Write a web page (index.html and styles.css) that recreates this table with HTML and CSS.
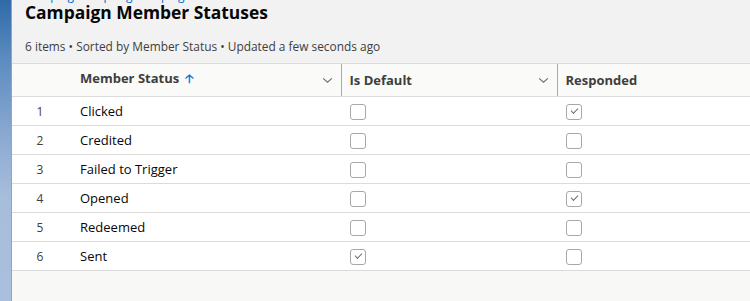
FILE: index.html
```html
<!DOCTYPE html>
<html lang="en">

<head>
    <meta charset="UTF-8">
    <meta name="viewport" content="width=device-width, initial-scale=1.0">
    <title>Campaign Member Statuses</title>
    <link rel="stylesheet" href="styles.css">
</head>

<body>
    <div class="rail"></div>

    <div class="panel">
        <div class="page-header">
            <div class="breadcrumb"><span>Campaigns &rsaquo; Spring Campaign</span></div>
            <h1>Campaign Member Statuses</h1>
            <p class="meta">6 items &bull; Sorted by Member Status &bull; Updated a few seconds ago</p>
        </div>

        <table class="status-table">
            <colgroup>
                <col class="col-num">
                <col class="col-status">
                <col class="col-default">
                <col>
            </colgroup>
            <thead>
                <tr>
                    <th></th>
                    <th>
                        <div class="th-inner">
                            <span>Member Status <span class="sort-arrow">&#129121;</span></span>
                            <svg class="chevron" viewBox="0 0 12 8"><path d="M1 1.5 L6 6 L11 1.5" /></svg>
                        </div>
                    </th>
                    <th class="divided">
                        <div class="th-inner">
                            <span>Is Default</span>
                            <svg class="chevron" viewBox="0 0 12 8"><path d="M1 1.5 L6 6 L11 1.5" /></svg>
                        </div>
                    </th>
                    <th class="divided">
                        <div class="th-inner">
                            <span>Responded</span>
                        </div>
                    </th>
                </tr>
            </thead>
            <tbody>
                <tr><td class="num">1</td><td>Clicked</td><td><span class="box"></span></td><td><span class="box checked"></span></td></tr>
                <tr><td class="num">2</td><td>Credited</td><td><span class="box"></span></td><td><span class="box"></span></td></tr>
                <tr><td class="num">3</td><td>Failed to Trigger</td><td><span class="box"></span></td><td><span class="box"></span></td></tr>
                <tr><td class="num">4</td><td>Opened</td><td><span class="box"></span></td><td><span class="box checked"></span></td></tr>
                <tr><td class="num">5</td><td>Redeemed</td><td><span class="box"></span></td><td><span class="box"></span></td></tr>
                <tr><td class="num">6</td><td>Sent</td><td><span class="box checked"></span></td><td><span class="box"></span></td></tr>
            </tbody>
        </table>
    </div>
</body>

</html>
```

FILE: styles.css
```css
body {
    margin: 0;
    display: flex;
    height: 301px;
    overflow: hidden;
    font-family: "Open Sans", Arial, sans-serif;
    color: #080707;
    background-color: #f8f8f7;
}

.rail {
    width: 11px;
    flex-shrink: 0;
    background: linear-gradient(180deg, #2f6aa8 0%, #5d8cc0 20%, #8aa9d1 45%, #a7bddc 65%, #a9bfdd 100%);
    border-right: 1px solid #8ea6c6;
}

.panel {
    flex: 1;
    background-color: #f8f8f7;
}

.page-header {
    background-color: #f3f2f2;
    padding: 0 0 0 13px;
    height: 63px;
    overflow: hidden;
}

/* only the descenders of the breadcrumb show above the title */
.breadcrumb {
    height: 3px;
    overflow: hidden;
    position: relative;
}

.breadcrumb span {
    position: absolute;
    left: 0;
    bottom: 0;
    font-size: 12px;
    line-height: 15px;
    color: #006dcc;
    white-space: nowrap;
}

h1 {
    font-size: 17.4px;
    font-weight: 700;
    line-height: 18px;
    margin: 0;
    color: #080707;
}

.meta {
    font-size: 11.9px;
    color: #3e3e3c;
    margin: 17px 0 0 0;
}

.status-table {
    width: 100%;
    border-collapse: collapse;
    table-layout: fixed;
    background-color: #fff;
}

.col-num {
    width: 56px;
}

.col-status {
    width: 273px;
}

.col-default {
    width: 216px;
}

th {
    height: 32px;
    padding: 0 8px 0 12px;
    text-align: left;
    font-size: 13px;
    font-weight: 700;
    color: #3e3e3c;
    border-top: 1px solid #dddbda;
    border-bottom: 1px solid #dddbda;
    background-color: #fafaf9;
}

th.divided {
    border-left: 1px solid #a8a8a8;
    padding-left: 8px;
}

.th-inner {
    display: flex;
    align-items: center;
    justify-content: space-between;
}

.sort-arrow {
    color: #0070d2;
    font-size: 12px;
    margin-left: 2px;
}

.chevron {
    width: 11px;
    height: 7px;
    fill: none;
    stroke: #706e6b;
    stroke-width: 1.3;
}

td {
    height: 28px;
    padding: 0 8px 0 12px;
    font-size: 13px;
    border-bottom: 1px solid #dddbda;
}

td:nth-child(3),
td:nth-child(4) {
    padding-left: 9px;
}

td.num {
    padding: 0;
    text-align: center;
    font-size: 12px;
    color: #3e3e3c;
}

.box {
    display: block;
    width: 14px;
    height: 14px;
    border: 1px solid #a8a8a8;
    border-radius: 3px;
    background-color: #fff;
    position: relative;
    top: 1px;
}

.box.checked::after {
    content: "";
    position: absolute;
    left: 4px;
    top: 3px;
    width: 6px;
    height: 3px;
    border-left: 1.5px solid #706e6b;
    border-bottom: 1.5px solid #706e6b;
    transform: rotate(-45deg);
}
```
